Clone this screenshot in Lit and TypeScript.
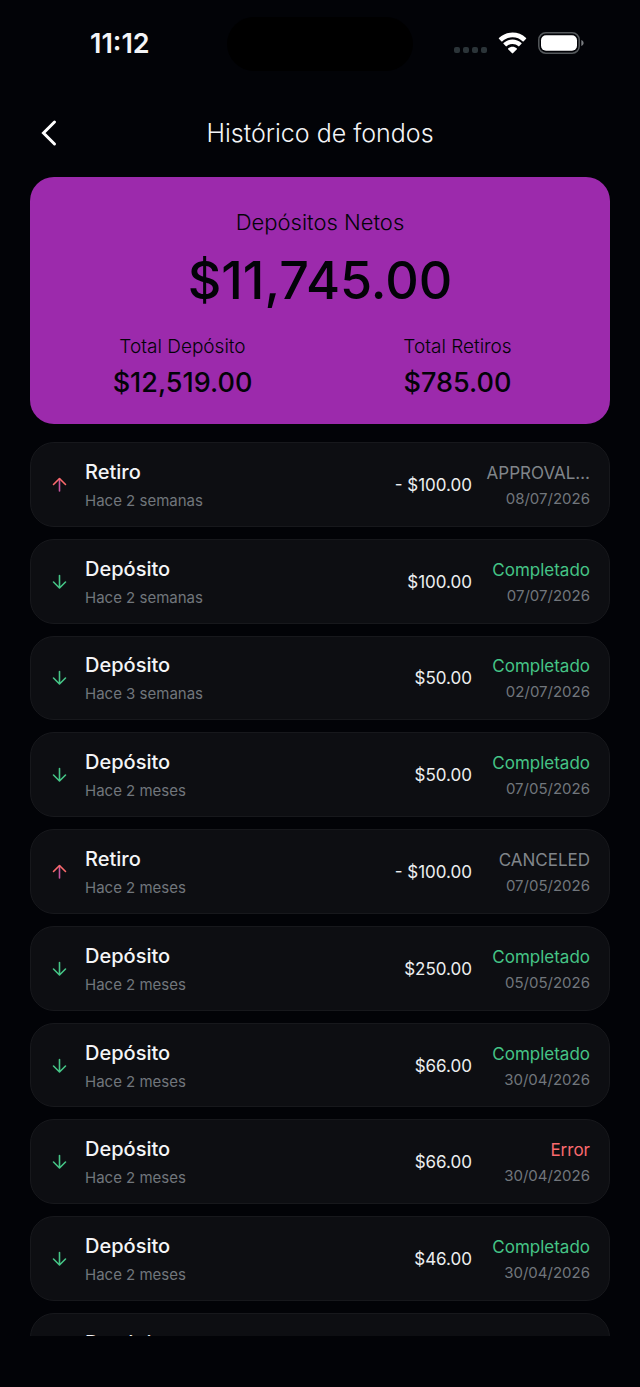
import { LitElement, html, css, svg } from "lit";
import { customElement, property } from "lit/decorators.js";
import { classMap } from "lit/directives/class-map.js";

type Kind = "deposit" | "withdrawal";
type Tone = "ok" | "muted" | "error";

interface Movement {
  kind: Kind;
  ago: string;
  amount: string;
  status: string;
  tone: Tone;
  date: string;
}

const MOVEMENTS: Movement[] = [
  { kind: "withdrawal", ago: "Hace 2 semanas", amount: "- $100.00", status: "APPROVAL…", tone: "muted", date: "08/07/2026" },
  { kind: "deposit", ago: "Hace 2 semanas", amount: "$100.00", status: "Completado", tone: "ok", date: "07/07/2026" },
  { kind: "deposit", ago: "Hace 3 semanas", amount: "$50.00", status: "Completado", tone: "ok", date: "02/07/2026" },
  { kind: "deposit", ago: "Hace 2 meses", amount: "$50.00", status: "Completado", tone: "ok", date: "07/05/2026" },
  { kind: "withdrawal", ago: "Hace 2 meses", amount: "- $100.00", status: "CANCELED", tone: "muted", date: "07/05/2026" },
  { kind: "deposit", ago: "Hace 2 meses", amount: "$250.00", status: "Completado", tone: "ok", date: "05/05/2026" },
  { kind: "deposit", ago: "Hace 2 meses", amount: "$66.00", status: "Completado", tone: "ok", date: "30/04/2026" },
  { kind: "deposit", ago: "Hace 2 meses", amount: "$66.00", status: "Error", tone: "error", date: "30/04/2026" },
  { kind: "deposit", ago: "Hace 2 meses", amount: "$46.00", status: "Completado", tone: "ok", date: "30/04/2026" },
  { kind: "deposit", ago: "", amount: "", status: "", tone: "ok", date: "" },
];

@customElement("status-bar")
export class StatusBar extends LitElement {
  static styles = css`
    :host {
      display: grid;
      grid-template-columns: 1fr 186px 1fr;
      align-items: center;
      height: 54px;
      padding: 17px 0 15px;
    }
    .time {
      padding-left: 90px;
      font-size: 27px;
      line-height: 30px;
      font-weight: 600;
    }
    .island {
      height: 54px;
      border-radius: 27px;
      background: #000;
    }
    .icons {
      display: flex;
      align-items: center;
      justify-content: flex-end;
      gap: 11px;
      padding: 0 56px 2px 0;
    }
    svg {
      display: block;
    }
  `;

  render() {
    return html`
      <div class="time">11:12</div>
      <div class="island"></div>
      <div class="icons">
        <svg width="33" height="22" viewBox="0 0 33 22" fill="#2b3438" aria-hidden="true">
          ${[0, 9, 18, 27].map((x) => svg`<rect x=${x} y="15" width="6" height="6" rx="2" />`)}
        </svg>
        <svg width="29" height="22" viewBox="0 0 29 22" fill="#fff" aria-hidden="true">
          <path d="M14.5 5.2c4 0 7.600 1.600 10.300 4.200.2.2.5.2.7 0l2.600-2.700c.2-.2.2-.6 0-.8C20.500-1.300 8.500-1.300.900 5.900c-.2.2-.2.600 0 .8l2.600 2.700c.2.2.5.2.7 0C6.900 6.800 10.500 5.200 14.500 5.200z" />
          <path d="M14.500 12c2.200 0 4.300.8 5.900 2.300.2.2.5.2.7 0l2.400-2.500c.2-.2.2-.6 0-.8-5.100-4.800-12.900-4.800-18 0-.2.2-.2.600 0 .8l2.400 2.500c.2.2.5.2.7 0C10.200 12.800 12.300 12 14.500 12z" />
          <path d="M18.900 16.400c.2.2.2.600 0 .8l-4 4.100c-.2.2-.600.2-.8 0l-4-4.100c-.2-.2-.2-.600 0-.8 2.500-2.200 6.300-2.200 8.800 0z" />
        </svg>
        <svg width="46" height="22" viewBox="0 0 46 22" aria-hidden="true">
          <rect x=".8" y=".8" width="40.400" height="20.400" rx="7" fill="none" stroke="#55595c" stroke-width="1.500" />
          <rect x="3" y="3.200" width="36" height="15.600" rx="5" fill="#fff" />
          <path d="M43.300 8v6c1.400-.5 2.300-1.600 2.300-3s-.9-2.500-2.300-3z" fill="#7a7d80" />
        </svg>
      </div>
    `;
  }
}

@customElement("funds-summary")
export class FundsSummary extends LitElement {
  static styles = css`
    :host {
      display: flex;
      flex-direction: column;
      padding: 29px 30px 20px;
      border-radius: 24px;
      background: #9c2aac;
      color: #020307;
      text-align: center;
    }
    .label {
      font-size: 22px;
      line-height: 32px;
      font-weight: 300;
    }
    .net {
      font-size: 52px;
      line-height: 86px;
      font-weight: 500;
    }
    .totals {
      display: grid;
      grid-template-columns: 1fr 1fr;
      column-gap: 30px;
      margin-top: 8px;
    }
    .small {
      font-size: 19px;
      line-height: 30px;
      font-weight: 300;
    }
    .sum {
      font-size: 27px;
      line-height: 42px;
      font-weight: 500;
    }
  `;

  render() {
    return html`
      <div class="label">Depósitos Netos</div>
      <div class="net">$11,745.00</div>
      <div class="totals">
        <div>
          <div class="small">Total Depósito</div>
          <div class="sum">$12,519.00</div>
        </div>
        <div>
          <div class="small">Total Retiros</div>
          <div class="sum">$785.00</div>
        </div>
      </div>
    `;
  }
}

@customElement("movement-card")
export class MovementCard extends LitElement {
  @property({ attribute: false }) movement!: Movement;

  static styles = css`
    :host {
      box-sizing: border-box;
      display: flex;
      align-items: center;
      height: 100%;
      min-height: 84px;
      padding: 1px 19px 0;
      border: 1px solid #17181c;
      border-radius: 24px;
      background: #0d0e12;
    }
    .arrow {
      display: block;
      flex: none;
      margin-right: 17px;
    }
    .what {
      flex: 1;
      min-width: 0;
    }
    .title {
      font-size: 20px;
      line-height: 32px;
      font-weight: 500;
      color: #f4f5f7;
    }
    .ago {
      font-size: 15px;
      line-height: 26px;
      color: #71767c;
      min-height: 26px;
    }
    .amount {
      font-size: 17px;
      line-height: 24px;
      color: #eceef0;
    }
    .state {
      flex: none;
      display: flex;
      flex-direction: column;
      align-items: flex-end;
      width: 100px;
      margin-left: 18px;
      white-space: nowrap;
    }
    .status {
      font-size: 17px;
      line-height: 28px;
    }
    .ok {
      color: #45c486;
    }
    .muted {
      color: #80858a;
    }
    .error {
      color: #f9696e;
    }
    .date {
      font-size: 15px;
      line-height: 24px;
      color: #71767c;
    }
  `;

  private renderArrow(kind: Kind) {
    return kind === "withdrawal"
      ? html`<svg class="arrow" width="18" height="18" viewBox="0 0 18 18" fill="none" stroke-width="1.600" stroke-linecap="round" stroke-linejoin="round" aria-hidden="true">
          <path d="M9.500 3v12" stroke="#c4559f" />
          <path d="M3.500 8.500L9.500 2.500 15.500 8.500" stroke="#fb6a6c" />
        </svg>`
      : html`<svg class="arrow" width="18" height="18" viewBox="0 0 18 18" fill="none" stroke="#45c486" stroke-width="1.600" stroke-linecap="round" stroke-linejoin="round" aria-hidden="true">
          <path d="M9.500 2.500v12M3.500 9L9.500 15 15.500 9" />
        </svg>`;
  }

  render() {
    const m = this.movement;
    return html`
      ${this.renderArrow(m.kind)}
      <div class="what">
        <div class="title">${m.kind === "withdrawal" ? "Retiro" : "Depósito"}</div>
        <div class="ago">${m.ago}</div>
      </div>
      <div class="amount">${m.amount}</div>
      <div class="state">
        <div class=${classMap({ status: true, [m.tone]: true })}>${m.status}</div>
        <div class="date">${m.date}</div>
      </div>
    `;
  }
}

@customElement("app-root")
export class AppRoot extends LitElement {
  static styles = css`
    :host {
      box-sizing: border-box;
      display: flex;
      flex-direction: column;
      height: 100vh;
      padding-bottom: 51px;
      background: #020307;
      color: #f4f5f7;
      font-family: Inter, "Liberation Sans", sans-serif;
    }
    .header {
      display: grid;
      grid-template-columns: 40px 1fr 40px;
      align-items: center;
      padding: 27px 30px 24px;
    }
    .back {
      display: grid;
      place-items: center;
      width: 40px;
      height: 40px;
      padding: 0;
      border: 0;
      background: none;
      color: #fff;
      cursor: pointer;
    }
    .heading {
      margin: 0;
      font-size: 25px;
      line-height: 40px;
      font-weight: 300;
      text-align: center;
    }
    .summary {
      margin: 0 30px 18px;
    }
    /* Nine full rows share the space; the tenth only peeks in and is clipped. */
    .list {
      flex: 1;
      min-height: 0;
      display: grid;
      grid-template-rows: repeat(9, minmax(84px, 1fr)) 23px;
      row-gap: 12px;
      margin: 0;
      padding: 0 30px;
      list-style: none;
      overflow: hidden;
    }
  `;

  render() {
    return html`
      <status-bar></status-bar>
      <header class="header">
        <button class="back" type="button" aria-label="Atrás">
          <svg width="40" height="40" viewBox="0 0 40 40" fill="none" stroke="currentColor" stroke-width="3" stroke-linecap="round" aria-hidden="true">
            <path d="M24.500 9L13.500 20 24.500 31" />
          </svg>
        </button>
        <h1 class="heading">Histórico de fondos</h1>
      </header>
      <funds-summary class="summary"></funds-summary>
      <ul class="list">
        ${MOVEMENTS.map((m) => html`<li><movement-card .movement=${m}></movement-card></li>`)}
      </ul>
    `;
  }
}
